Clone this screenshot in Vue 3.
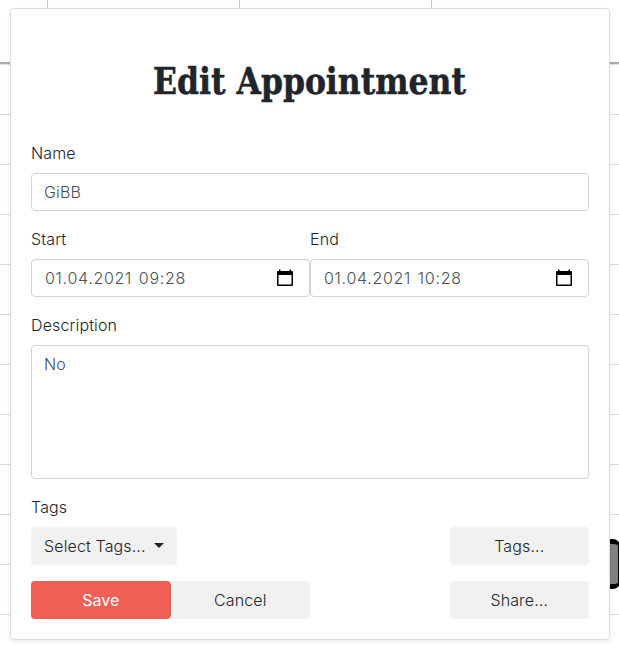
<script setup>
import { ref } from 'vue'

const name = ref('GiBB')
const description = ref('No')
const dates = [
  { label: 'Start', day: '01.04.2021', time: '09:28' },
  { label: 'End', day: '01.04.2021', time: '10:28' },
]
</script>

<template>
  <div class="page">
    <div class="calendar">
      <div class="head"><i v-for="n in 4" :key="n"></i></div>
      <div v-for="n in 12" :key="n" class="slot"></div>
      <div class="event"></div>
    </div>
    <form class="dialog" @submit.prevent>
      <h1><span>Edit Appointment</span></h1>
      <div class="group">
        <label for="name">Name</label>
        <input id="name" v-model="name" class="control" type="text" />
      </div>
      <div class="group dates">
        <div v-for="d in dates" :key="d.label">
          <label>{{ d.label }}</label>
          <div class="control date">
            <span>{{ d.day }} {{ d.time }}</span>
            <svg width="16" height="18" viewBox="0 0 16 18">
              <path d="M2 0.500h1.500v1.500h9V0.500H14v1.500h1Q16 2 16 3v13q0 1-1 1H1Q0 17 0 16V3Q0 2 1 2h1zM1.500 6v9.500h13V6z" fill-rule="evenodd" />
            </svg>
          </div>
        </div>
      </div>
      <div class="group">
        <label for="desc">Description</label>
        <textarea id="desc" v-model="description" class="control"></textarea>
      </div>
      <div class="group">
        <label>Tags</label>
        <div class="row">
          <button class="btn select">Select Tags...<i class="caret"></i></button>
          <button class="btn wide end">Tags...</button>
        </div>
      </div>
      <div class="row">
        <button class="btn wide save">Save</button>
        <button class="btn wide">Cancel</button>
        <button class="btn wide end">Share...</button>
      </div>
    </form>
  </div>
</template>

<style>
body { background: #fff; overflow: hidden; }
</style>

<style scoped>
* { box-sizing: border-box; }
.page {
  position: relative;
  height: 645px;
  overflow: hidden;
  font: 300 16px/24px Inter, sans-serif;
  letter-spacing: 0.13px;
  color: #212529;
}
.head {
  display: grid;
  grid-template-columns: 48px 192px 192px 1fr;
  height: 64px;
  border-bottom: 2px solid #aaa;
}
.head i { border-right: 1px solid #ccc; }
.head i:last-child { border-right: 0; }
.slot { height: 50px; border-top: 1px solid #dee2e6; }
.slot + .slot { border-top-color: #dcdce0; }
.event {
  position: absolute;
  left: 560px;
  top: 539px;
  width: 60px;
  height: 50px;
  border: 5px solid #000;
  border-right-width: 2px;
  border-radius: 7px;
  background: #808080;
}
.dialog {
  position: absolute;
  left: 10px;
  top: 8px;
  width: 600px;
  height: 632px;
  padding: 48px 20px 20px;
  border: 1px solid #dbdcde;
  border-radius: 4px;
  background: #fff;
  box-shadow: 0 2px 4px rgba(0, 0, 0, 0.075);
}
h1 {
  margin: 0 0 36px;
  text-align: center;
  font: 700 37px/48px "DejaVu Serif Condensed", "DejaVu Serif", serif;
  font-stretch: condensed;
  letter-spacing: 0;
  white-space: nowrap;
}
h1 span {
  display: inline-block;
  margin: 0 -40px;
  transform: scaleX(0.945);
  -webkit-text-stroke: 0.5px #212529;
}
.group { margin-bottom: 16px; }
label { display: block; margin-bottom: 8px; }
.control {
  display: block;
  width: 100%;
  height: 38px;
  padding: 6px 12px;
  border: 1px solid #ced4da;
  border-radius: 4px;
  background: #fff;
  color: #495057;
  font: inherit;
  letter-spacing: inherit;
  outline: 0;
}
textarea.control { height: 134px; resize: none; }
.dates { display: grid; grid-template-columns: 1fr 1fr; }
.date {
  display: flex;
  align-items: center;
  justify-content: space-between;
  padding: 0 16.5px 0 13px;
  letter-spacing: 0.7px;
  word-spacing: 1.600px;
}
.date svg { fill: #000; }
.row { display: flex; }
.btn {
  height: 38px;
  padding: 0 13px;
  border: 0;
  border-radius: 4px;
  background: #f1f1f1;
  color: #212529;
  font: inherit;
  letter-spacing: inherit;
}
.wide { width: 139.5px; }
.end { margin-left: auto; }
.save { background: #ef5f54; color: #fff; font-weight: 400; letter-spacing: 0; }
.select { display: flex; align-items: center; width: 146px; white-space: nowrap; }
.caret {
  margin: -2px 0 0 auto;
  border: 5px solid transparent;
  border-top-color: #212529;
  border-bottom: 0;
}
</style>
